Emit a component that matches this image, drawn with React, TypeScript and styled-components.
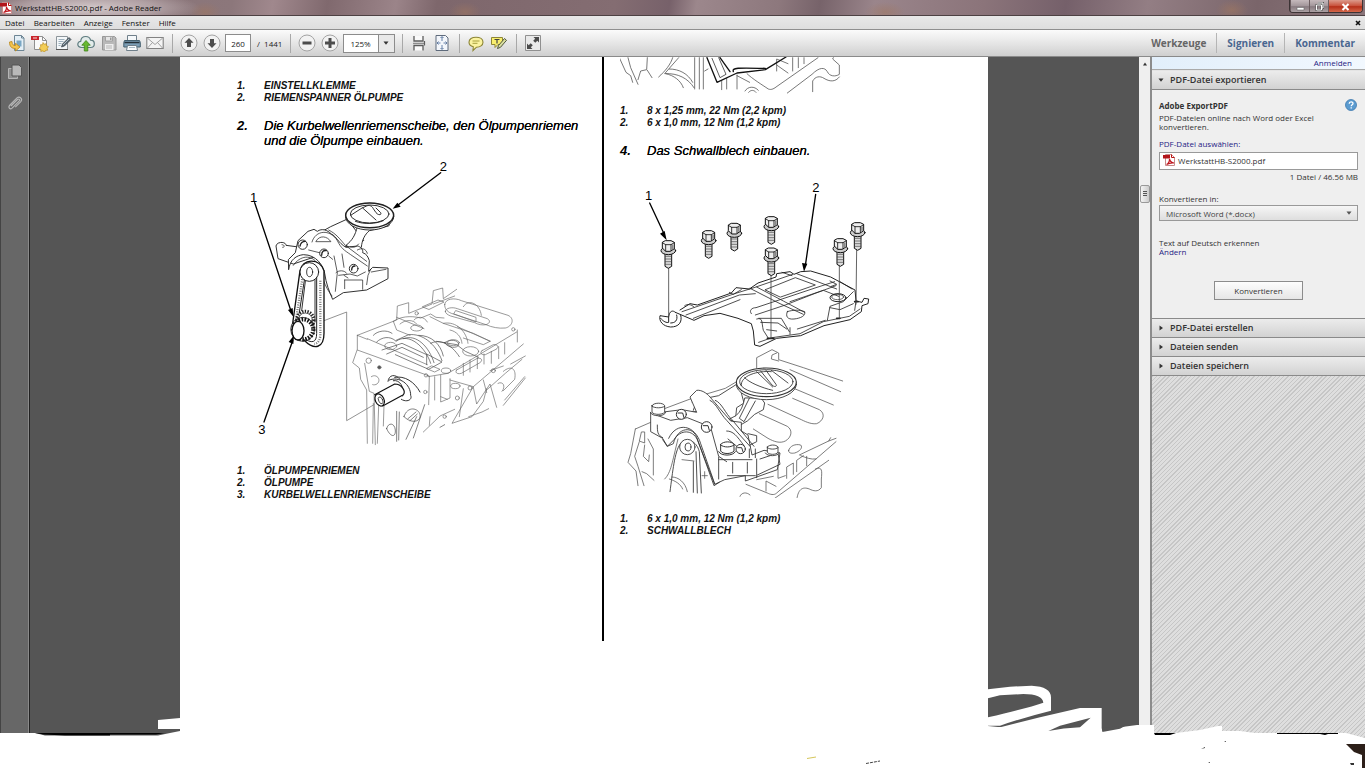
import React from "react";
import styled, { createGlobalStyle, css } from "styled-components";

const ui = `"Open Sans", "Noto Sans", sans-serif`;

const GlobalStyle = createGlobalStyle`
  * { box-sizing: border-box; }
  body { margin: 0; background: #fff; font-family: ${ui}; color: #333; overflow: hidden; }
  button, input, select { font-family: inherit; margin: 0; padding: 0; }
  p, h1, h2, ol { margin: 0; padding: 0; }
`;

const Window = styled.div`
  position: relative;
  display: flex;
  flex-direction: column;
  height: 100vh;
`;

/* ---------- window frame ---------- */

const TitleBar = styled.header`
  display: flex;
  align-items: center;
  flex: none;
  height: 16px;
  border-bottom: 1px solid #4d4143;
  background: radial-gradient(ellipse 110px 18px at 90px 8px, #d3c8ca 0%, #c9bcbf99 60%, transparent 100%),
    radial-gradient(ellipse 16px 10px at 205px 12px, #a0776088, transparent),
    radial-gradient(ellipse 16px 10px at 465px 12px, #a0776088, transparent),
    radial-gradient(ellipse 20px 10px at 885px 12px, #a0776088, transparent),
    radial-gradient(ellipse 16px 10px at 1232px 10px, #a0776099, transparent),
    linear-gradient(100deg, #857074 0%, #8c777b 17%, #a0888d 20%, #80696e 24%, #9b8489 29%, #7e676c 32%, #846d72 45%,
      #77616a 49%, #9c878c 51%, #8d787d 57%, #77636a 60%, #9a858b 64%, #8b747a 72%, #75606a 78%, #937e84 84%, #7a656a 92%, #8a757a 100%);
`;

const Title = styled.h1`
  flex: 1;
  padding-left: 3px;
  font-size: 8px;
  line-height: 15px;
  font-weight: 400;
  color: #111;
`;

const Controls = styled.div`
  display: flex;
  align-self: flex-start;
  height: 13px;
  margin-right: 2px;
  border: 1px solid #3c3335;
  border-top: 0;
  border-radius: 0 0 4px 4px;
  overflow: hidden;
`;

const ControlButton = styled.button<{ $close?: boolean }>`
  display: flex;
  align-items: center;
  justify-content: center;
  width: ${(p) => (p.$close ? 34 : 19)}px;
  border: 0;
  border-left: 1px solid #6b5d60;
  background: ${(p) =>
    p.$close
      ? "linear-gradient(#dc9a8b, #c8503a 50%, #b52f19 55%, #d4674a)"
      : "linear-gradient(#c5b9bc, #a2969a 50%, #887b80 55%, #aba0a3)"};
`;

const MenuBar = styled.nav`
  display: flex;
  align-items: center;
  flex: none;
  height: 14px;
  padding: 0 3px 0 5px;
  gap: 9px;
  background: linear-gradient(#e8e8e8, #dedede);
  border-bottom: 1px solid #8f8f8f;
`;

const MenuItem = styled.button`
  border: 0;
  background: none;
  color: #111;
  font-size: 8px;
  line-height: 12px;
`;

const CloseDoc = styled(MenuItem)`
  display: flex;
  margin-left: auto;
`;

/* ---------- toolbar ---------- */

const Toolbar = styled.div`
  display: flex;
  align-items: center;
  flex: none;
  height: 27px;
  padding-left: 7px;
  gap: 3px;
  border-bottom: 1px solid #8a8a8a;
  background: linear-gradient(#fbfbfb, #e6e6e6 50%, #cfcfcf);
`;

const IconButton = styled.button`
  display: flex;
  align-items: center;
  justify-content: center;
  width: 20px;
  height: 20px;
  border: 0;
  background: none;
`;

const Separator = styled.span`
  width: 1px;
  height: 19px;
  margin: 0 3px 0 4px;
  background: #a8a8a8;
`;

const PageInput = styled.input`
  width: 26px;
  height: 18px;
  border: 1px solid #8c8c8c;
  background: #fff;
  text-align: center;
  font-size: 8px;
  color: #222;
`;

const PageTotal = styled.span`
  padding: 0 1px 0 3px;
  font-size: 8px;
  color: #222;
`;

const selectBase = css`
  appearance: none;
  border: 0;
  background: none;
  font-size: 8px;
  outline: none;
`;

const Zoom = styled.label`
  display: flex;
  width: 52px;
  height: 19px;
  border: 1px solid #8c8c8c;
  background: linear-gradient(90deg, #fff 34px, #8c8c8c 34px, #8c8c8c 35px, #e9e9e9 35px);
  align-items: center;
  padding-right: 5px;
  select {
    ${selectBase}
    flex: 1;
    min-width: 0;
    height: 17px;
    padding-left: 6px;
    color: #222;
  }
`;

const Tabs = styled.div`
  display: flex;
  margin-left: auto;
  align-items: center;
`;

const TabButton = styled.button<{ $active?: boolean }>`
  height: 20px;
  padding: 0 10px;
  border: 0;
  background: none;
  & + & {
    border-left: 1px solid #b5b5b5;
  }
  font-size: 10px;
  line-height: 20px;
  font-weight: 700;
  color: ${(p) => (p.$active ? "#666" : "#4a6790")};
`;

/* ---------- work area ---------- */

const Body = styled.div`
  display: flex;
  flex: 1;
  min-height: 0;
`;

const Rail = styled.nav`
  display: flex;
  flex-direction: column;
  align-items: center;
  flex: none;
  width: 30px;
  padding-top: 5px;
  gap: 11px;
  background: #676767;
  border-left: 1px solid #444;
  border-right: 1px solid #222;
  box-shadow: inset -1px 0 #8a8a8a;
`;

const Canvas = styled.main`
  display: flex;
  flex: 1;
  min-width: 0;
  padding-right: 1px;
  justify-content: center;
  background: #555;
  overflow: hidden;
`;

const Sheet = styled.article`
  display: grid;
  grid-template-columns: 422px 1fr;
  align-items: start;
  width: 100%;
  max-width: 808px;
  background: #fff;
  color: #000;
  font-family: "Liberation Sans", Arial, sans-serif;
  font-style: italic;
`;

const LeftColumn = styled.section`
  padding: 23px 0 0 57px;
`;

const RightColumn = styled.section`
  padding: 0 0 104px 16px;
  border-left: 2px solid #000;
`;

const Legend = styled.div<{ $spaced?: boolean }>`
  display: grid;
  grid-template-columns: 27px 1fr;
  margin-top: ${(p) => (p.$spaced ? 15 : 0)}px;
  font-size: 10px;
  line-height: 12px;
  font-weight: 700;
  color: #111;
`;

const Step = styled.div`
  display: grid;
  grid-template-columns: 27px 1fr;
  margin-top: 14px;
  font-size: 13px;
  line-height: 15px;
  text-shadow: 0 0 0 #000;
  b {
    text-shadow: none;
  }
`;

const Figure = styled.svg`
  display: block;
  fill: none;
  stroke: #333;
  stroke-width: 2.4;
  stroke-linejoin: round;
  stroke-linecap: round;
  text {
    font: 39px "Liberation Sans", Arial, sans-serif;
    fill: #000;
    stroke: none;
  }
`;

const ScrollTrack = styled.div`
  display: flex;
  flex-direction: column;
  align-items: center;
  flex: none;
  width: 11px;
  padding-top: 4px;
  background: #efefef;
`;

const ScrollThumb = styled.div`
  display: flex;
  align-items: center;
  justify-content: center;
  width: 10px;
  height: 18px;
  margin-top: 118px;
  border: 1px solid #999;
  border-radius: 2px;
  background: linear-gradient(90deg, #f4f4f4, #ccc);
`;

/* ---------- tools pane ---------- */

const Pane = styled.aside`
  display: flex;
  flex-direction: column;
  flex: none;
  width: 215px;
  border-left: 2px solid #8c8c8c;
  font-size: 8px;
  background: #efefef;
`;

const SignIn = styled.div`
  height: 13px;
  padding-right: 13px;
  background: linear-gradient(90deg, #e2effb, #f2f8fe);
  text-align: right;
  line-height: 12px;
  border-bottom: 1px solid #aaa;
`;

const Link = styled.a`
  color: #1f1c84;
  text-decoration: none;
`;

const PaneHeader = styled.button<{ $open?: boolean }>`
  display: flex;
  align-items: center;
  gap: 6px;
  flex: none;
  height: ${(p) => (p.$open ? 20 : 19)}px;
  padding: 0 6px;
  border: 0;
  border-top: 1px solid ${(p) => (p.$open ? "#e4e4e4" : "#8a8a8a")};
  border-bottom: ${(p) => (p.$open ? "1px solid #8a8a8a" : "0")};
  background: linear-gradient(#ececec, #d2d2d2);
  color: #333;
  font-size: 9px;
  line-height: 16px;
  font-weight: 600;
`;

const Section = styled.form`
  display: flex;
  flex-direction: column;
  padding: 9px 7px 18px;
  line-height: 9px;
`;

const SectionTitle = styled.div`
  display: flex;
  align-items: center;
  justify-content: space-between;
  height: 12px;
  margin-bottom: 2px;
  h2 {
    font-size: 8px;
    font-weight: 700;
  }
`;

const FileBox = styled.div`
  display: flex;
  align-items: center;
  gap: 3px;
  height: 18px;
  margin: 4px 0 2px;
  padding: 0 3px 2px;
  border: 1px solid #999;
  background: #fff;
`;

const FileSize = styled.p`
  text-align: right;
`;

const Format = styled.div`
  display: flex;
  align-items: center;
  height: 16px;
  margin: 2px 0 17px;
  padding-right: 5px;
  border: 1px solid #999;
  background: linear-gradient(#f6f6f6, #dedede);
  select {
    ${selectBase}
    flex: 1;
    height: 14px;
    padding-left: 6px;
    color: #444;
  }
`;

const Gap = styled.div<{ $size: number }>`
  height: ${(p) => p.$size}px;
`;

const Convert = styled.button`
  align-self: center;
  width: 89px;
  height: 19px;
  border: 1px solid #8c8c8c;
  background: linear-gradient(#fdfdfd, #e6e6e6);
  font-size: 8px;
  color: #333;
`;

const Hatch = styled.div`
  flex: 1;
  border-top: 1px solid #8a8a8a;
  background: repeating-linear-gradient(135deg, #c6c6c6 0 1px, #dedede 1px 3px);
`;

const TornEdge = styled.svg`
  position: absolute;
  left: 0;
  bottom: 0;
  width: 100%;
  height: 98px;
  pointer-events: none;
`;

/* ---------- icons ---------- */

const Icon = ({ w = 18, h = 18, children }: { w?: number; h?: number; children: React.ReactNode }) => (
  <svg width={w} height={h} viewBox={`0 0 ${w} ${h}`} fill="none" aria-hidden="true">
    {children}
  </svg>
);

const PdfGlyph = () => (
  <Icon w={12} h={12}>
    <path d="M2.500.5h6l3 3v8h-9z" fill="#fff" stroke="#c98a8a" />
    <path d="M8.500.5v3h3" stroke="#b11" />
    <path d="M0 1h7v3.500H0z" fill="#b3151b" />
    <path d="M3.500 10.500c2-1 3-4 3-5.500c.5 2 2 3.800 4.500 4c-3-.6-5 .2-7.500 1.500z" stroke="#c01820" strokeWidth="1.200" />
  </Icon>
);

const Caret = ({ dir = "down", color = "#333" }: { dir?: "down" | "right" | "up"; color?: string }) => (
  <svg width="6" height="6" viewBox="0 0 6 6" fill={color} aria-hidden="true">
    <path d={dir === "down" ? "M.5 1.500h5L3 4.800z" : dir === "up" ? "M1 4.500h4L3 1.500z" : "M1.500.5v5L5 3z"} />
  </svg>
);

const OpenIcon = () => (
  <Icon>
    <path d="M6.500 1.500h7l2.500 2.500v12.500H6.500z" fill="#e4eff6" stroke="#6d8594" />
    <path d="M13.500 1.500V4H16" stroke="#6d8594" />
    <path d="M8.500 6.500h5v6h-5z" fill="#7aa7c4" />
    <path d="M1.500 8c0 5 2.500 6.500 6 6.500V17l4.500-4-4.500-3.800v2.300c-2.200.2-3.500-1-3.500-4z" fill="#f3c44e" stroke="#b98618" strokeWidth=".8" />
  </Icon>
);
const CreateIcon = () => (
  <Icon>
    <path d="M3.500 2.500h8l4 4v9h-12z" fill="#fafafa" stroke="#909090" />
    <path d="M11.500 2.500v4h4" stroke="#909090" />
    <path d="M0 2h8v4H0z" fill="#c8252b" />
    <path d="M2 4h4" stroke="#fbdcdc" />
    <path d="m12 8.500 1.200 1.700 2.100-.5.200 2.100 2 .9-1.300 1.500.5 2-2.100.1-1 1.700-1.800-1.100-2 .5.100-2-1.700-1.200 1.600-1.400-.3-2.100 2.100.1z" fill="#f3cd55" stroke="#b98d1f" strokeWidth=".7" />
  </Icon>
);
const EditIcon = () => (
  <Icon>
    <path d="M2.500 2.500h11v13h-11z" fill="#f4f7f9" stroke="#8c959b" />
    <path d="M2 15.500h12" stroke="#555" />
    <path d="M4.500 5.500h6M4.500 7.500h5M4.500 9.500h3M4.500 11.500h2" stroke="#9db0bd" />
    <path d="m7.500 13 1-3L15 3.500l2 2-6.500 6.500z" fill="#5c6b75" stroke="#39444b" strokeWidth=".7" />
    <path d="m9 11 6-6" stroke="#c6d3dc" strokeWidth=".8" />
  </Icon>
);
const CloudIcon = () => (
  <Icon>
    <path d="M4.500 13.500C2 13.500.8 12 .8 10.300c0-1.800 1.300-3 2.900-3C3.900 4.500 6 2.500 8.800 2.500c2.400 0 4.200 1.400 4.800 3.600 2.200 0 3.700 1.500 3.700 3.600s-1.500 3.800-3.800 3.800z" fill="#e3eceb" stroke="#5f7d80" strokeWidth="1.200" />
    <path d="M9 6.500 4.800 11.200h2.500V17h3.500v-5.800h2.500z" fill="#67b931" stroke="#3f8418" strokeWidth=".8" />
  </Icon>
);
const SaveIcon = () => (
  <Icon>
    <path d="M2.500 2.500h12l1.500 1.500v12H2.500z" fill="#b9b9b9" stroke="#979797" />
    <path d="M5.500 2.500h7v4.500h-7z" fill="#e6e6e6" stroke="#a2a2a2" />
    <path d="M10 3.500h1.500v2.500H10z" fill="#979797" />
    <path d="M5 10h8.500v6H5z" fill="#eee" />
    <path d="M6 12h6M6 14h6" stroke="#b5b5b5" />
  </Icon>
);
const PrintIcon = () => (
  <Icon>
    <path d="M4.500 1.500h9v5h-9z" fill="#f5f8fa" stroke="#6f7f8a" />
    <path d="M1.500 6.500h15l.8 2v4.500H.8V8.500z" fill="#7b9db5" stroke="#45606f" />
    <path d="M1.500 8.500h15" stroke="#26323a" strokeWidth="1.500" />
    <path d="M4.500 11.500h9l1 5h-11z" fill="#fafcfd" stroke="#6f7f8a" />
    <path d="M6 13.500h6" stroke="#a9bac5" />
  </Icon>
);
const MailIcon = () => (
  <Icon>
    <path d="M.8 3.500h16.400v11H.8z" fill="#f4f4f4" stroke="#838383" strokeWidth="1.100" />
    <path d="M1.500 4.200 9 10.500l7.500-6.300M1.500 14l5-5.500M16.500 14l-5-5.500" stroke="#999" strokeWidth=".9" />
  </Icon>
);
const Round = ({ d }: { d: string }) => (
  <Icon>
    <circle cx="9" cy="9" r="8" fill="#f2f2f2" stroke="#a3a3a3" />
    <path d={d} fill="#4d4d4d" />
  </Icon>
);
const ScrollModeIcon = () => (
  <Icon>
    <path d="M4 2v5h9V2M4 16.500v-5h9v5" fill="#fafafa" stroke="#5c5c5c" strokeWidth="1.300" />
    <path d="M3 9.300h11" stroke="#777" />
    <path d="M14.500 7v4.500" stroke="#5c5c5c" strokeWidth="1.200" />
  </Icon>
);
const FitIcon = () => (
  <Icon>
    <path d="M3 1.500h9.500l2.500 2.500v12.500H3z" fill="#f3f6fb" stroke="#5f6b7c" />
    <path d="M9 3v4M9 11v4M5 9h2.500M10.500 9H13" stroke="#6480a8" />
    <path d="m7.500 4 1.500-1.500L10.500 4M7.500 14 9 15.500 10.500 14M5.500 7.500 4 9l1.500 1.500M12.500 7.500 14 9l-1.500 1.500" stroke="#3f5d8a" strokeWidth=".8" />
  </Icon>
);
const NoteIcon = () => (
  <Icon>
    <path d="M9 3.200c4 0 7 2 7 5s-3 5-6.500 5L6 16.500l.3-3.800C3.600 12 2 10.200 2 8.200c0-3 3-5 7-5z" fill="#fbf3a0" stroke="#8d8636" strokeWidth="1.100" />
    <path d="M5.500 7h7M5.500 9.300h5" stroke="#a79f3c" />
  </Icon>
);
const HighlightIcon = () => (
  <Icon>
    <path d="M1.500 3.500h11v7H8l-3 3v-3H1.500z" fill="#f9ef6e" stroke="#8d8636" />
    <path d="M4.500 5.500h5M7 5.500v4" stroke="#444" strokeWidth="1.200" />
    <path d="m7.500 14.500 1-3 6-7 2 1.800-6 7z" fill="#d9dfa0" stroke="#50563a" />
  </Icon>
);
const ExpandIcon = () => (
  <Icon>
    <path d="M1.500 1.500h15v15h-15z" fill="#e9e9e9" stroke="#909090" />
    <path d="M9.500 3H15v5.500l-1.700-1.700-2 2L9.200 6.700l2-2zM8.500 15H3V9.500l1.700 1.700 2-2 2.100 2.100-2 2z" fill="#4a4a4a" />
  </Icon>
);

/* ---------- drawings ---------- */

const arrow = { stroke: "#000", strokeWidth: 4 };
const head = { fill: "#000", stroke: "none" };

const TopFragment = () => (
  <Figure width="270" height="48" viewBox="30 6 810 144" aria-hidden="true">
    <g stroke="#555">
      <path d="M28 8l20 44 14 10 6 20M54 8l8 30 22 50M84 74l8-26 18-4 2-36M112 46l14 22M188 8c-6 20-22 40-42 58M206 8l-42 48c40-2 70 14 88 42M178 42c30 0 56 14 70 40M168 56c24 6 44 20 52 42" />
      <path d="M254 8v94M268 8v94M280 8v94M335 78v26M350 70v32M381 60v42M284 48l10-6" />
      <path d="M381 62l38 20M500 48V12l34 14M500 30l34 24M548 48V8M565 38V8M582 26V8M411 56c14 14 46 34 64 46 10 4 18-2 26-8L624 8M532 114l74-56c22-22 38-22 46-8 6 14 24 16 36 8V30l-20-18 2-4M608 110V78c8-14 22-16 34-8 16 10 34 12 46-4M405 108c8-14 28-16 40-2M416 112c6-8 16-8 22 0" />
    </g>
    <path d="M291 8l30 74 60-28 85-10 62-38M330 8l30 42M370 50c-4-12 10-12 96-10" stroke="#111" strokeWidth="4" />
    <path d="M306 10l24 58 18-10-22-50" />
  </Figure>
);

const PumpFigure = () => (
  <Figure width="303" height="302" viewBox="21 -6 909 906" role="img" aria-label="Ölpumpe und Motorblock">
    {/* engine block */}
    <g stroke="#666" strokeWidth="2">
      <path d="M382 556l118-46 2-42 34-10v32l70-28 4-40 28-8 2 32 40-28M610 462l64-24M382 556v42l-14 40 20 16 4 34 18 32 2 160M382 600l216 78-2 86M382 556l30 12M412 566l180 78M404 640l14 84 14 6 4 154M430 760l-2 120M446 768l-4 112M462 768l-2 60M424 680a14 14 0 1 1 4 24" />
      <path d="M644 464c0-18 30-22 50-12l140 44c22 10 12 34-8 38-20 2-40-2-58-10l-104-34c-14-6-20-14-20-26z" />
      <path d="M646 484c0-10 20-14 36-8l90 30c10 6 8 14-4 18-12 2-22 0-34-6l-72-20c-10-4-16-8-16-14zM672 492l66 24v-14l-60-20zM700 470c16-26 50-8 54 26" />
      <path d="M490 514c20-14 50-18 82-10l30-12 16 10 24 2M490 514l10 26 40 16M500 502l82 34M510 522c16-14 40-14 50 0M552 510c10-12 30-12 40 6M600 500l40 20 90 30 50 24-20 10-60-20M640 520c40-8 70 26 74 60M660 540c20 4 34 20 36 40M682 530l100 44M578 470l46-20 18 6-44 22z" />
      <path d="M430 556c12-14 40-18 56-6M440 576c16-16 40-18 56-4l40-18c40-4 80 24 100 78M498 574c40-30 90 20 104 66M520 566c40-16 78 26 92 72M566 556c38 0 66 26 74 62M456 600l60-20 74 34v30M470 612l46-20 64 30M590 612l46 24-40 22-100-44M602 580c26-14 60 0 86 40M620 574l60 10 26 20 40 18M644 578c16-12 40-8 42 4s-30 16-42-4z" stroke="#444" />
      <ellipse cx="722" cy="604" rx="24" ry="14" />
      <ellipse cx="482" cy="588" rx="18" ry="11" />
      <ellipse cx="560" cy="534" rx="18" ry="9" />
      <ellipse cx="670" cy="578" rx="18" ry="9" />
      <ellipse cx="648" cy="662" rx="14" ry="8" />
      <ellipse cx="676" cy="708" rx="14" ry="8" />
      <path d="M680 660l60-34c14-4 20 4 10 12l-56 32c-14 4-20-4-14-10zM756 602l34-18c14-2 18 8 8 14l-32 16c-12 2-18-6-10-12zM590 656l24 10 16-8-24-10zM594 680l60-10 74-44 132-80M632 676v80l28-12v-58M632 740l20 8M614 680v70M660 690l70 20 150-128M730 710l-64 110 60-20 34-46 10-38M700 716l-12 84M730 712l10 50 40-60 20 70M760 690l10 38M700 640v36M720 630v36M742 620v36M762 612v30M784 604v36M806 590v36M824 578v34M862 540v36M780 662l40-14M770 720l56-50 50-42M820 664c24-20 40-8 34 24l-34 34M842 642l44-24M820 766l66-82M824 750l60-70M804 700c16-8 24 10 12 24M716 800l40-14 20-10M580 846l50-48 44-20M600 800l-2 26" />
      <path d="M500 784v90M508 786l-2 84M560 800l-32 68M584 764l-34 100M470 836c4-20 24-18 26 4s-14 24-26-4zM522 800c10-34 44-26 48-6s-24 30-48 6zM534 806l24-20M540 812l22-20M630 832l14-8" stroke="#444" />
      <circle cx="448" cy="652" r="5" fill="#555" /><circle cx="588" cy="676" r="5" /><circle cx="586" cy="726" r="5" /><circle cx="720" cy="714" r="6" /><circle cx="790" cy="662" r="6" /><circle cx="682" cy="744" r="6" /><circle cx="644" cy="800" r="5" /><circle cx="416" cy="632" r="8" /><circle cx="560" cy="490" r="5" /><circle cx="850" cy="538" r="5" />
    </g>
    {/* crankshaft nose */}
    <path d="M474 694c2-20 22-24 36-6M478 690c30-12 64 12 64 46 6 14-12 22-28 12M494 682c30-6 60 14 76 44M490 692c20-4 34 20 28 46" strokeWidth="3" />
    <path d="M434 734l60-32c22 0 34 22 26 32l-62 34" fill="#fff" stroke="#111" strokeWidth="3.500" />
    <ellipse cx="449" cy="750" rx="13" ry="19" fill="#fff" stroke="#111" strokeWidth="3.500" transform="rotate(-25 449 750)" />
    <ellipse cx="452" cy="751" rx="6" ry="11" transform="rotate(-25 452 751)" />
    <path d="M282 512l68-26v326l82-48" stroke="#777" />
    {/* oil pump body */}
    <g stroke="#222" strokeWidth="2.800" fill="#fff">
      <path d="M350 208l-48 22-76 42-28 18-30-4c0-12-28-12-30 2l6 38 46 16 60-20 150-50z" />
      <path d="M382 230c-6 26-16 42-34 56l24 14 22-8c2-22 10-38 24-50l58-14 12-24z" />
      <ellipse cx="419" cy="200" rx="72" ry="40" />
      <ellipse cx="419" cy="196" rx="72" ry="37" strokeWidth="4.500" />
      <ellipse cx="419" cy="192" rx="58" ry="27" />
      <path d="M362 196l34-22 14-6c8-4 16 0 20 8l8 12c6 8 18 8 14 0l-14-14M398 174l40 36M376 214c28 10 60 8 84-2" fill="none" />
      <path d="M176 358c4-30 24-42 44-44 40 0 60 34 64 56 4 30 14 56 24 78l32-20 70-8 64-34v-32l-46-2-12 12 2-32c-4-12-8-20-20-24 2-10-6-18-16-20l-34 4c-24-14-28-32-44-40-12-12-28-18-42-8l-10-6-18 6-30 28-8 36-20 20z" />
      <path d="M246 276c10-36 54-40 76-4 12 24 20 28 40 42l50 34M258 274c10-20 34-16 44 0zM296 240c24 12 34 28 50 46l64 48M236 300l40 10M296 318l12 10M382 300c14-8 26-4 30 10M360 290c10 4 18 2 26-8M312 318l10 50-6 56M326 376l34-4 22 6 24-12M344 390h54v28M344 390v26M354 384l-12-8M410 404l4-28 8-18M424 366l44-8M318 368c8-8 26-8 32 2M336 312l6 40M190 346c20-30 54-34 74-4 12 34 18 66 42 96M156 284c8 0 10 8 2 8" fill="none" strokeWidth="2.200" />
      <circle cx="218" cy="284" r="14" /><circle cx="282" cy="310" r="13" /><circle cx="371" cy="356" r="13" />
      <path d="M210 288c2-10 8-14 16-14M275 316c0-12 6-16 14-14M365 360c0-8 4-12 10-12" strokeWidth="4" fill="none" />
    </g>
    {/* belt and pulley */}
    <path d="M188 520l22-158c6-36 58-40 72 0v188c0 46-30 50-58 22z" fill="#fff" stroke="#111" strokeWidth="4" />
    <path d="M206 500l20-128c6-20 30-16 34 8v170c0 30-16 28-30 20" stroke="#222" strokeWidth="3" />
    <path d="M198 508l22-140M271 392v166c-2 14-8 22-18 24" stroke="#777" strokeWidth="7" strokeLinecap="butt" strokeDasharray="3 4" />
    <path d="M215 482l12-96c6-16 24-12 28 4v126" fill="#fff" strokeWidth="3" />
    <circle cx="238" cy="366" r="28" fill="#fff" stroke="#222" strokeWidth="3" />
    <ellipse cx="239" cy="366" rx="9" ry="14" stroke="#111" />
    <circle cx="226" cy="510" r="26" stroke="#222" strokeWidth="9" strokeLinecap="butt" strokeDasharray="4 4" fill="#fff" />
    <circle cx="226" cy="510" r="21" stroke="#333" />
    <circle cx="220" cy="538" r="30" stroke="#111" strokeWidth="13" strokeLinecap="butt" strokeDasharray="5 4" fill="#fff" />
    <circle cx="218" cy="538" r="36" stroke="#222" />
    <ellipse cx="204" cy="542" rx="18" ry="28" fill="#fff" stroke="#111" strokeWidth="4" />
    <path d="M74 158l110 328M102 816l86-244M632 68L500 168" {...arrow} />
    <path d="M190 500l-16-20 14-6zM192 556l-2 26-14-6zM488 176l14-18 10 12z" {...head} strokeWidth="4" />
    <text x="60" y="155">1</text>
    <text x="629" y="64">2</text>
    <text x="85" y="852">3</text>
  </Figure>
);

const bolts = [[175, 198], [296, 168], [373, 146], [484, 126], [484, 220], [691, 192], [743, 144]];

const BaffleFigure = () => (
  <Figure width="270" height="340" viewBox="30 -51 810 1020" role="img" aria-label="Schwallblech">
    {/* baffle plate */}
    <g stroke="#222" strokeWidth="3">
      <path d="M210 405L240 386 262 390 364 354 378 338 418 342 444 324 498 306 500 296 540 290 552 298 572 290 602 288 662 306 735 345 738 378 756 382 762 370 776 372 774 386 756 392 754 410 720 434 642 452 572 482 500 490 450 514 434 510 430 468 424 446 384 430 330 415 282 422 252 436 196 412" />
      <path d="M196 412c-8-8-18-4-20 14l-26-4c-4 16 8 32 32 34 24 0 36-14 30-36M152 430c8 10 18 14 24 12v-16M200 420c4 16-4 24-18 24" />
      <path d="M216 410l158-54 58-18 116-40M228 420l160-60 48-4M250 430l140-56M420 340l90 46 70 32M440 336l80 42 64 34M532 410c-6 14 0 24 20 22 20-2 36-10 32-22-16-6-34-6-52 0zM424 416c-8-10 2-18 14-18l180-60 56-18M436 420l90-30 92-36 60-22M466 344l90-36 60 22-104 36zM540 380l100-34 46 18M560 296l120 46M440 432c20-6 14 10 20 34l14 22M446 430h68l24 40M452 442l52 2 26 18M540 458v20M562 462l84-26M652 436l8-42 40-14 30-30M660 398l30 6 40-18M516 292l30 10M358 352l12 6 24-14M224 392c8-6 20-4 28 4M738 378l-4 28M690 320l36 22M470 464l30 4M660 318l20 10-16 6" strokeWidth="2.400" />
      <ellipse cx="684" cy="368" rx="24" ry="12" />
      <ellipse cx="683" cy="366" rx="18" ry="8" strokeWidth="2" />
      <path d="M446 502l40-14 84-12 70-36 78-16 32-22" strokeWidth="2.400" />
      <path d="M472 490h20M680 430h10M734 380h10" strokeWidth="5" />
      <path d="M176 280v142M483 300v190M688 272v158M740 222l-2 166" stroke="#444" strokeWidth="2.500" />
    </g>
    {bolts.map(([x, y]) => (
      <g key={`${x}-${y}`} transform={`translate(${x} ${y})`} stroke="#111" strokeWidth="3">
        <path d="M-10 36v40l10 6 10-6V36z" fill="#ddd" />
        <path d="M-9 46H9M-9 54H9M-9 62H9M-9 70H9" strokeWidth="2" stroke="#444" />
        <ellipse cy="29" rx="22" ry="12" fill="#ccc" />
        <path d="M-18 5v16l10 10h14l12-8V4L8-1h-16z" fill="#eee" />
        <path d="M-18 5L-8 11h16l10-6M-8 11v19M8 11v18" strokeWidth="2.500" />
        <path d="M13 12v10" strokeWidth="5" stroke="#888" />
      </g>
    ))}
    {/* engine below */}
    <g stroke="#555" strokeWidth="2.300" transform="translate(0 510)">
      <path d="M440 70V38l46-24 20 10v20l74 24 118 40M500 24l-14 6-2 12 22 6M540 74l152 66M556 132l114 48M548 160l80 34c20 12 12 34-8 42-14 2-30-4-46-12l-100-46M448 206l84 38c18 12 12 34-6 44-16 8-34 2-52-8l-44-28M536 316c4-14 20-20 36-16 8 8-4 20-18 24-10 2-20 0-18-8zM568 330l88-42 22-8M656 288l6-10M678 290L500 444c-8 8-20 4-28 0l-64-26M572 332c16 6 30 12 46 10M494 460l162-114M616 372c22-10 20 8 18 30v26c-10 14-24 10-36 4-20-8-36 0-38 38M504 360v40l22-8M530 400v-34l20-12v34M560 380v-34l20-14M590 362v-28M440 404l50-10M468 438v-30l30 16M390 454c4-12 20-14 30-4" />
      <path d="M76 252l46-20M76 252l-14 74-8 26 24 26 6 44M94 262l-6 26 16 6V262zM88 290l-14 44 10 30 18 58M104 300l-4 34 16 16 2-20M130 390v-78l-16-30M96 380l14 6 22 20M150 196l96-36 100-30 34-20M164 402c20-20 22-50 40-120M186 396c20 0 40 16 46 44M178 402c20 6 34 16 40 30M216 344l36 4M276 392h16M284 380v20" />
    </g>
    <g stroke="#333" strokeWidth="2.600" transform="translate(0 510)" fill="#fff">
      <path d="M246 170l14-12 16 4 50-10 60-38 16 60-22 14-4 38-80 20-70-20M250 196c6-30 40-36 56-6M246 200h60" />
      <path d="M404 160c-4 22-12 40-26 52l-20 10 30 20 24-14 22-20 26-14 4-20-10-14z" />
      <ellipse cx="469" cy="118" rx="90" ry="46" />
      <ellipse cx="469" cy="112" rx="90" ry="43" strokeWidth="3.500" />
      <ellipse cx="469" cy="110" rx="80" ry="36" />
      <path d="M394 122c-4-30 50-46 90-42M404 98c12 14 50 30 84 38M440 80l48 46M452 78l34 42c8 8 16 4 12-2l-30-42M484 76l50 38M418 160l-30 60 14 10 34-62" fill="none" />
      <path d="M122 204v56l36 20 14 24 20-20c20-32 56-30 70 0l52 134 30-14 62-12v16l96-34 8-50-48-8-36 14-12-60-20-12v-26l-32-4-62-72c-10-12-26-22-40-20l-20 20 20 46-44-8-80 10z" />
      <path d="M122 204l60 22 50-8 50 20M142 240c0 20 0 30 16 38M158 284l14 20 18-8c12-50 60-56 72-14l50 140 16-10M176 280c24-52 80-40 96 16l42 120M300 166c20 10 30 40 50 60l70 78M316 166c20 8 30 40 50 58l66 80M304 254l22 80 24 16M326 344h100M368 352v32M412 352v32M352 392h84M350 258c20 0 30 14 52 44M420 300l20-10V272l-26-6M354 282l36 30M418 312v26M436 312v26" fill="none" />
      <path d="M180 440c8-60 14-120 30-142 20-24 50-10 58 22l6 124M258 320l4 124M250 350v92" fill="none" />
      <circle cx="232" cy="306" r="23" /><ellipse cx="234" cy="306" rx="9" ry="12" />
      <path d="M326 336v66M450 342l54-18 6 34-68 32M440 342v56" fill="none" />
      <path d="M121 202c4 14 44 14 46 0M126 182v20c6 8 30 8 38 0v-20c-4-10-34-10-38 0zM126 184c10 6 28 6 38 0" />
      <path d="M326 320c6 14 44 14 50 0M332 298v20c6 10 32 10 40 0v-20c-8-10-32-10-40 0zM332 300c10 8 30 8 40 0" strokeWidth="3" />
      <path d="M466 324c6 12 38 10 42 0M472 306v16c6 8 26 8 32 0v-16c-6-8-26-8-32 0zM472 308c8 6 24 6 32 0" />
      <circle cx="214" cy="208" r="15" strokeWidth="3" /><circle cx="290" cy="246" r="16" strokeWidth="3" /><circle cx="392" cy="312" r="14" strokeWidth="3" />
      <path d="M204 204h14l4 14M280 242h14l4 14M383 308h12l4 12" strokeWidth="3" fill="none" />
    </g>
    <path d="M119 84l42 90M617 58l-31 214" {...arrow} />
    <path d="M170 196l-20-20 14-8zM582 290l-6-26 16 2z" {...head} />
    <text x="105" y="74">1</text>
    <text x="607" y="50">2</text>
  </Figure>
);

const Items = ({ items, spaced }: { items: string[]; spaced?: boolean }) => (
  <Legend $spaced={spaced}>
    {items.map((t, i) => (
      <React.Fragment key={t}>
        <span>{i + 1}.</span>
        <span>{t}</span>
      </React.Fragment>
    ))}
  </Legend>
);

export default function App() {
  return (
    <Window>
      <GlobalStyle />
      <TitleBar>
        <PdfGlyph />
        <Title>WerkstattHB-S2000.pdf - Adobe Reader</Title>
        <Controls>
          <ControlButton aria-label="Minimieren">
            <Icon w={9} h={9}><path d="M1 5.500h7v2.500H1z" fill="#fff" stroke="#666" strokeWidth=".6" /></Icon>
          </ControlButton>
          <ControlButton aria-label="Wiederherstellen">
            <Icon w={9} h={9}><path d="M3 1h5v5H6.500M1.500 3h5v5h-5z" stroke="#555" strokeWidth="2" /><path d="M3 1h5v5H6.500M1.500 3h5v5h-5z" stroke="#fff" /></Icon>
          </ControlButton>
          <ControlButton $close aria-label="Schließen">
            <Icon w={9} h={9}><path d="m1.500 2 6 6m0-6-6 6" stroke="#fff" strokeWidth="2" /></Icon>
          </ControlButton>
        </Controls>
      </TitleBar>
      <MenuBar>
        {["Datei", "Bearbeiten", "Anzeige", "Fenster", "Hilfe"].map((m) => (
          <MenuItem key={m}>{m}</MenuItem>
        ))}
        <CloseDoc aria-label="Dokument schließen">
          <Icon w={8} h={8}><path d="m2 2 4 4m0-4-4 4" stroke="#111" strokeWidth="1.600" /></Icon>
        </CloseDoc>
      </MenuBar>
      <Toolbar>
        <IconButton aria-label="Öffnen"><OpenIcon /></IconButton>
        <IconButton aria-label="PDF erstellen"><CreateIcon /></IconButton>
        <IconButton aria-label="Unterschreiben"><EditIcon /></IconButton>
        <IconButton aria-label="Hochladen"><CloudIcon /></IconButton>
        <IconButton aria-label="Speichern"><SaveIcon /></IconButton>
        <IconButton aria-label="Drucken"><PrintIcon /></IconButton>
        <IconButton aria-label="E-Mail"><MailIcon /></IconButton>
        <Separator />
        <IconButton aria-label="Vorherige Seite"><Round d="M9 4 4.500 8.800H7V13h4V8.800h2.500z" /></IconButton>
        <IconButton aria-label="Nächste Seite"><Round d="M9 14 4.500 9.200H7V5h4v4.200h2.500z" /></IconButton>
        <PageInput aria-label="Seite" defaultValue="260" />
        <PageTotal>/&nbsp; 1441</PageTotal>
        <Separator />
        <IconButton aria-label="Verkleinern"><Round d="M4.500 7.500h9v3h-9z" /></IconButton>
        <IconButton aria-label="Vergrößern"><Round d="M7.500 4h3v3.500H14v3h-3.500V14h-3v-3.500H4v-3h3.500z" /></IconButton>
        <Zoom>
          <select aria-label="Zoom"><option>125%</option></select>
          <Caret />
        </Zoom>
        <Separator />
        <IconButton aria-label="Bildlauf"><ScrollModeIcon /></IconButton>
        <IconButton aria-label="Ganze Seite"><FitIcon /></IconButton>
        <Separator />
        <IconButton aria-label="Notiz"><NoteIcon /></IconButton>
        <IconButton aria-label="Hervorheben"><HighlightIcon /></IconButton>
        <Separator />
        <IconButton aria-label="Lesemodus"><ExpandIcon /></IconButton>
        <Tabs>
          <TabButton $active>Werkzeuge</TabButton>
          <TabButton>Signieren</TabButton>
          <TabButton>Kommentar</TabButton>
        </Tabs>
      </Toolbar>
      <Body>
        <Rail>
          <IconButton aria-label="Seitenminiaturen">
            <Icon>
              <path d="M2.500 5.500h9v10h-9z" fill="#8e8e8e" stroke="#b5b5b5" />
              <path d="M6 2h7l2.500 2.500V13H6z" fill="#b9b9b9" stroke="#555" />
            </Icon>
          </IconButton>
          <IconButton aria-label="Anlagen">
            <Icon>
              <path d="m5 12 6.500-6.500c1.400-1.200 2.800.2 1.600 1.600l-7 7c-2 1.800-4.300-.5-2.600-2.600l7.500-7.600c2.600-2.200 6 1 3.800 3.700l-5.500 5.500" stroke="#b5b5b5" strokeWidth="1.200" />
            </Icon>
          </IconButton>
        </Rail>
        <Canvas>
          <Sheet>
            <LeftColumn>
              <Items items={["EINSTELLKLEMME", "RIEMENSPANNER ÖLPUMPE"]} />
              <Step>
                <b>2.</b>
                <span>Die Kurbelwellenriemenscheibe, den Ölpumpenriemen<br />und die Ölpumpe einbauen.</span>
              </Step>
              <PumpFigure />
              <Items spaced items={["ÖLPUMPENRIEMEN", "ÖLPUMPE", "KURBELWELLENRIEMENSCHEIBE"]} />
            </LeftColumn>
            <RightColumn>
              <TopFragment />
              <Items items={["8 x 1,25 mm, 22 Nm (2,2 kpm)", "6 x 1,0 mm, 12 Nm (1,2 kpm)"]} />
              <Step>
                <b>4.</b>
                <span>Das Schwallblech einbauen.</span>
              </Step>
              <BaffleFigure />
              <Items spaced items={["6 x 1,0 mm, 12 Nm (1,2 kpm)", "SCHWALLBLECH"]} />
            </RightColumn>
          </Sheet>
        </Canvas>
        <ScrollTrack>
          <Caret dir="up" />
          <ScrollThumb>
            <Icon w={6} h={8}><path d="M1 1.500h4M1 3.500h4M1 5.500h4" stroke="#555" /></Icon>
          </ScrollThumb>
        </ScrollTrack>
        <Pane>
          <SignIn><Link href="#anmelden">Anmelden</Link></SignIn>
          <PaneHeader $open><Caret />PDF-Datei exportieren</PaneHeader>
          <Section onSubmit={(e) => e.preventDefault()}>
            <SectionTitle>
              <h2>Adobe ExportPDF</h2>
              <Icon w={13} h={12}>
                <circle cx="6" cy="6" r="5.500" fill="#5b9bd0" stroke="#3d79ad" strokeWidth=".8" />
                <path d="M4.200 4.700C4.200 2.300 8 2.400 8 4.500 8 5.800 6.200 5.800 6.200 7.200M6.200 8.300v1.300" stroke="#fff" strokeWidth="1.300" />
              </Icon>
            </SectionTitle>
            <p>PDF-Dateien online nach Word oder Excel<br />konvertieren.</p>
            <Gap $size={8} />
            <Link href="#datei">PDF-Datei auswählen:</Link>
            <FileBox><PdfGlyph />WerkstattHB-S2000.pdf</FileBox>
            <FileSize>1 Datei / 46.56 MB</FileSize>
            <Gap $size={13} />
            <label htmlFor="format">Konvertieren in:</label>
            <Format>
              <select id="format"><option>Microsoft Word (*.docx)</option></select>
              <Caret color="#555" />
            </Format>
            <p>Text auf Deutsch erkennen</p>
            <Link href="#sprache">Ändern</Link>
            <Gap $size={25} />
            <Convert type="submit">Konvertieren</Convert>
          </Section>
          <PaneHeader><Caret dir="right" />PDF-Datei erstellen</PaneHeader>
          <PaneHeader><Caret dir="right" />Dateien senden</PaneHeader>
          <PaneHeader><Caret dir="right" />Dateien speichern</PaneHeader>
          <Hatch />
        </Pane>
      </Body>
      <TornEdge viewBox="0 670 1365 98" preserveAspectRatio="none" aria-hidden="true">
        <path d="M0 733H35L45 735.500H158L170 733 180 731V729H158V720L180 718H988V726L998 727H1048L1103 731 1122 727 1137 725H1154V733H1176L1200 730 1218 726H1222V731L1240 731 1255 733H1346L1365 738V768H0Z" fill="#fff" />
        <path d="M35 733H165L156 734.500H110V735.500H65L44 734.500ZM1154 733H1176L1170 735H1155ZM1277 733H1338V734H1328L1325 735 1320 734H1277Z" fill="#000" />
        <g transform="translate(960 670) scale(.33333)">
          <path fillRule="evenodd" fill="#fff" d="M84 58L150 50 215 47Q273 50 273 82V122Q200 140 120 167H84ZM84 85L120 76 190 72Q248 72 250 98 200 115 84 142Z" />
          <path d="M115 173L240 142 360 114H425V174L428 190H115Z" fill="#fff" />
          <path d="M265 183L300 167 392 143 360 172Q310 174 265 183ZM427 186V174L500 165 480 176Z" fill="#555" />
        </g>
        <path d="M1346 744H1365V768H1362V755L1354 752Z" fill="#2c1f19" />
        <path d="M1201 749l4-2v1zM1208 763l2-1v1zM1224 741h2v1zM1350 763h4v2h-3z" fill="#333" />
        <path d="M807 758.500l9-1.500" stroke="#d5c65a" />
        <path d="M866 763.500l14-2.500" stroke="#444" strokeDasharray="3 1" />
      </TornEdge>
    </Window>
  );
}
